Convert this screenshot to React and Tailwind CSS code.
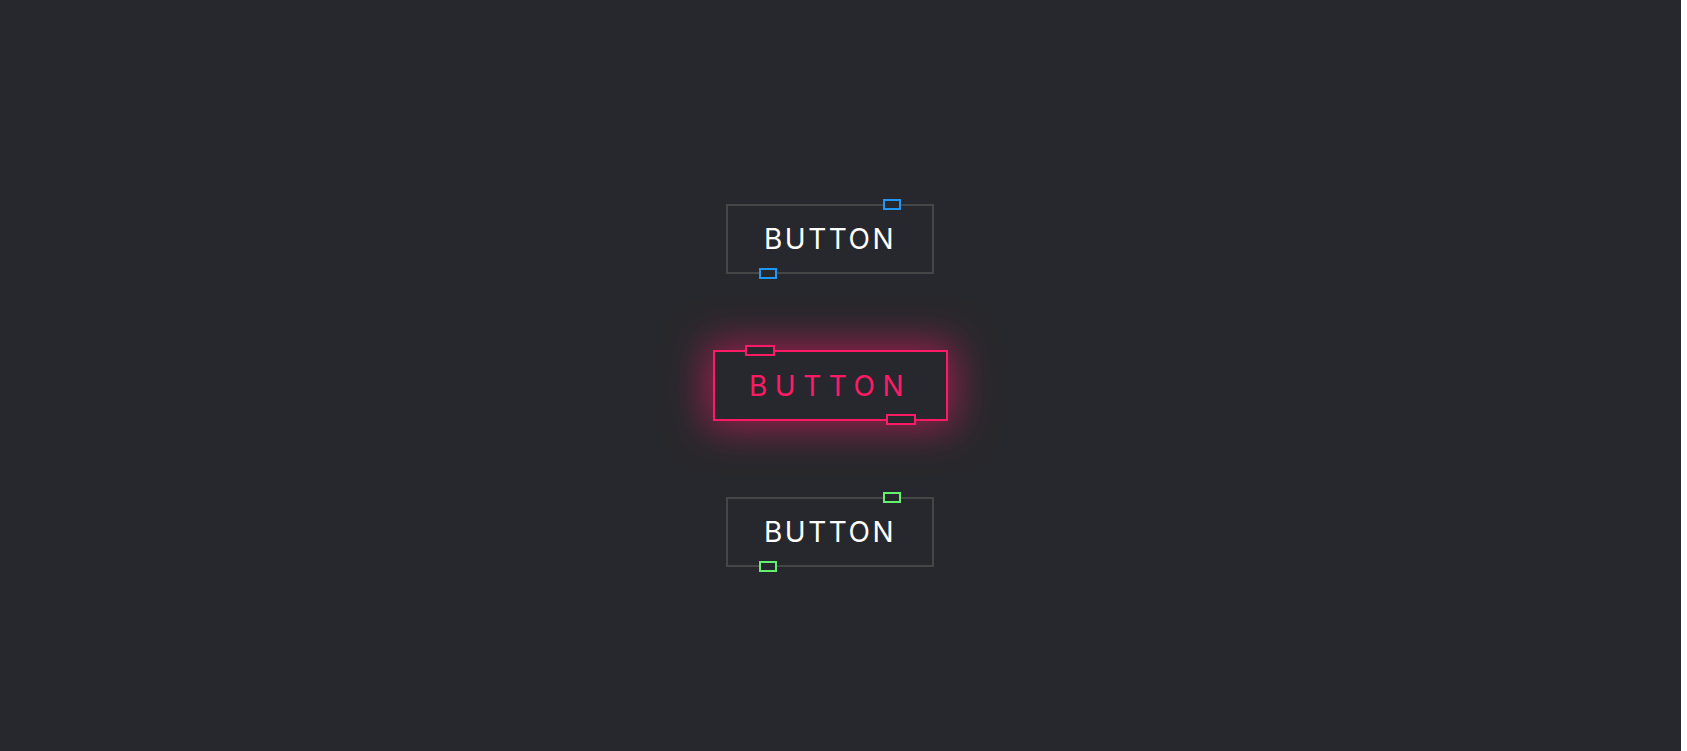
export default function App() {
  const base = "relative flex items-center justify-center h-[70px] border-2 bg-[#27282d] text-[28px] leading-none font-normal";

  return (
    <div className="w-[1681px] h-[751px] bg-[#27282d] font-['Inter',sans-serif]">
      <div className="w-[1660px] flex flex-col items-center gap-[76px] pt-[204px]">
        {/* Blue corner button */}
        <button className={`${base} w-[208px] border-[#464646] text-white tracking-[2.5px]`}>
          BUTTON
          <span className="absolute -top-[7px] right-[31px] w-[18px] h-[11px] border-2 border-[#2196f3] bg-[#27282d]" />
          <span className="absolute -bottom-[7px] left-[31px] w-[18px] h-[11px] border-2 border-[#2196f3] bg-[#27282d]" />
        </button>

        {/* Pink hovered button */}
        <button className={`${base} w-[235px] h-[71px] border-[#ff1a66] text-[#ff1a66] tracking-[7.5px] shadow-[0_0_40px_6px_rgba(255,26,102,0.55)]`}>
          BUTTON
          <span className="absolute -top-[7px] left-[30px] w-[30px] h-[11px] border-2 border-[#ff1a66] bg-[#27282d]" />
          <span className="absolute -bottom-[6px] right-[30px] w-[30px] h-[11px] border-2 border-[#ff1a66] bg-[#27282d]" />
        </button>

        {/* Green corner button */}
        <button className={`${base} w-[208px] border-[#464646] text-white tracking-[2.5px]`}>
          BUTTON
          <span className="absolute -top-[7px] right-[31px] w-[18px] h-[11px] border-2 border-[#62f06e] bg-[#27282d]" />
          <span className="absolute -bottom-[7px] left-[31px] w-[18px] h-[11px] border-2 border-[#62f06e] bg-[#27282d]" />
        </button>
      </div>
    </div>
  );
}
